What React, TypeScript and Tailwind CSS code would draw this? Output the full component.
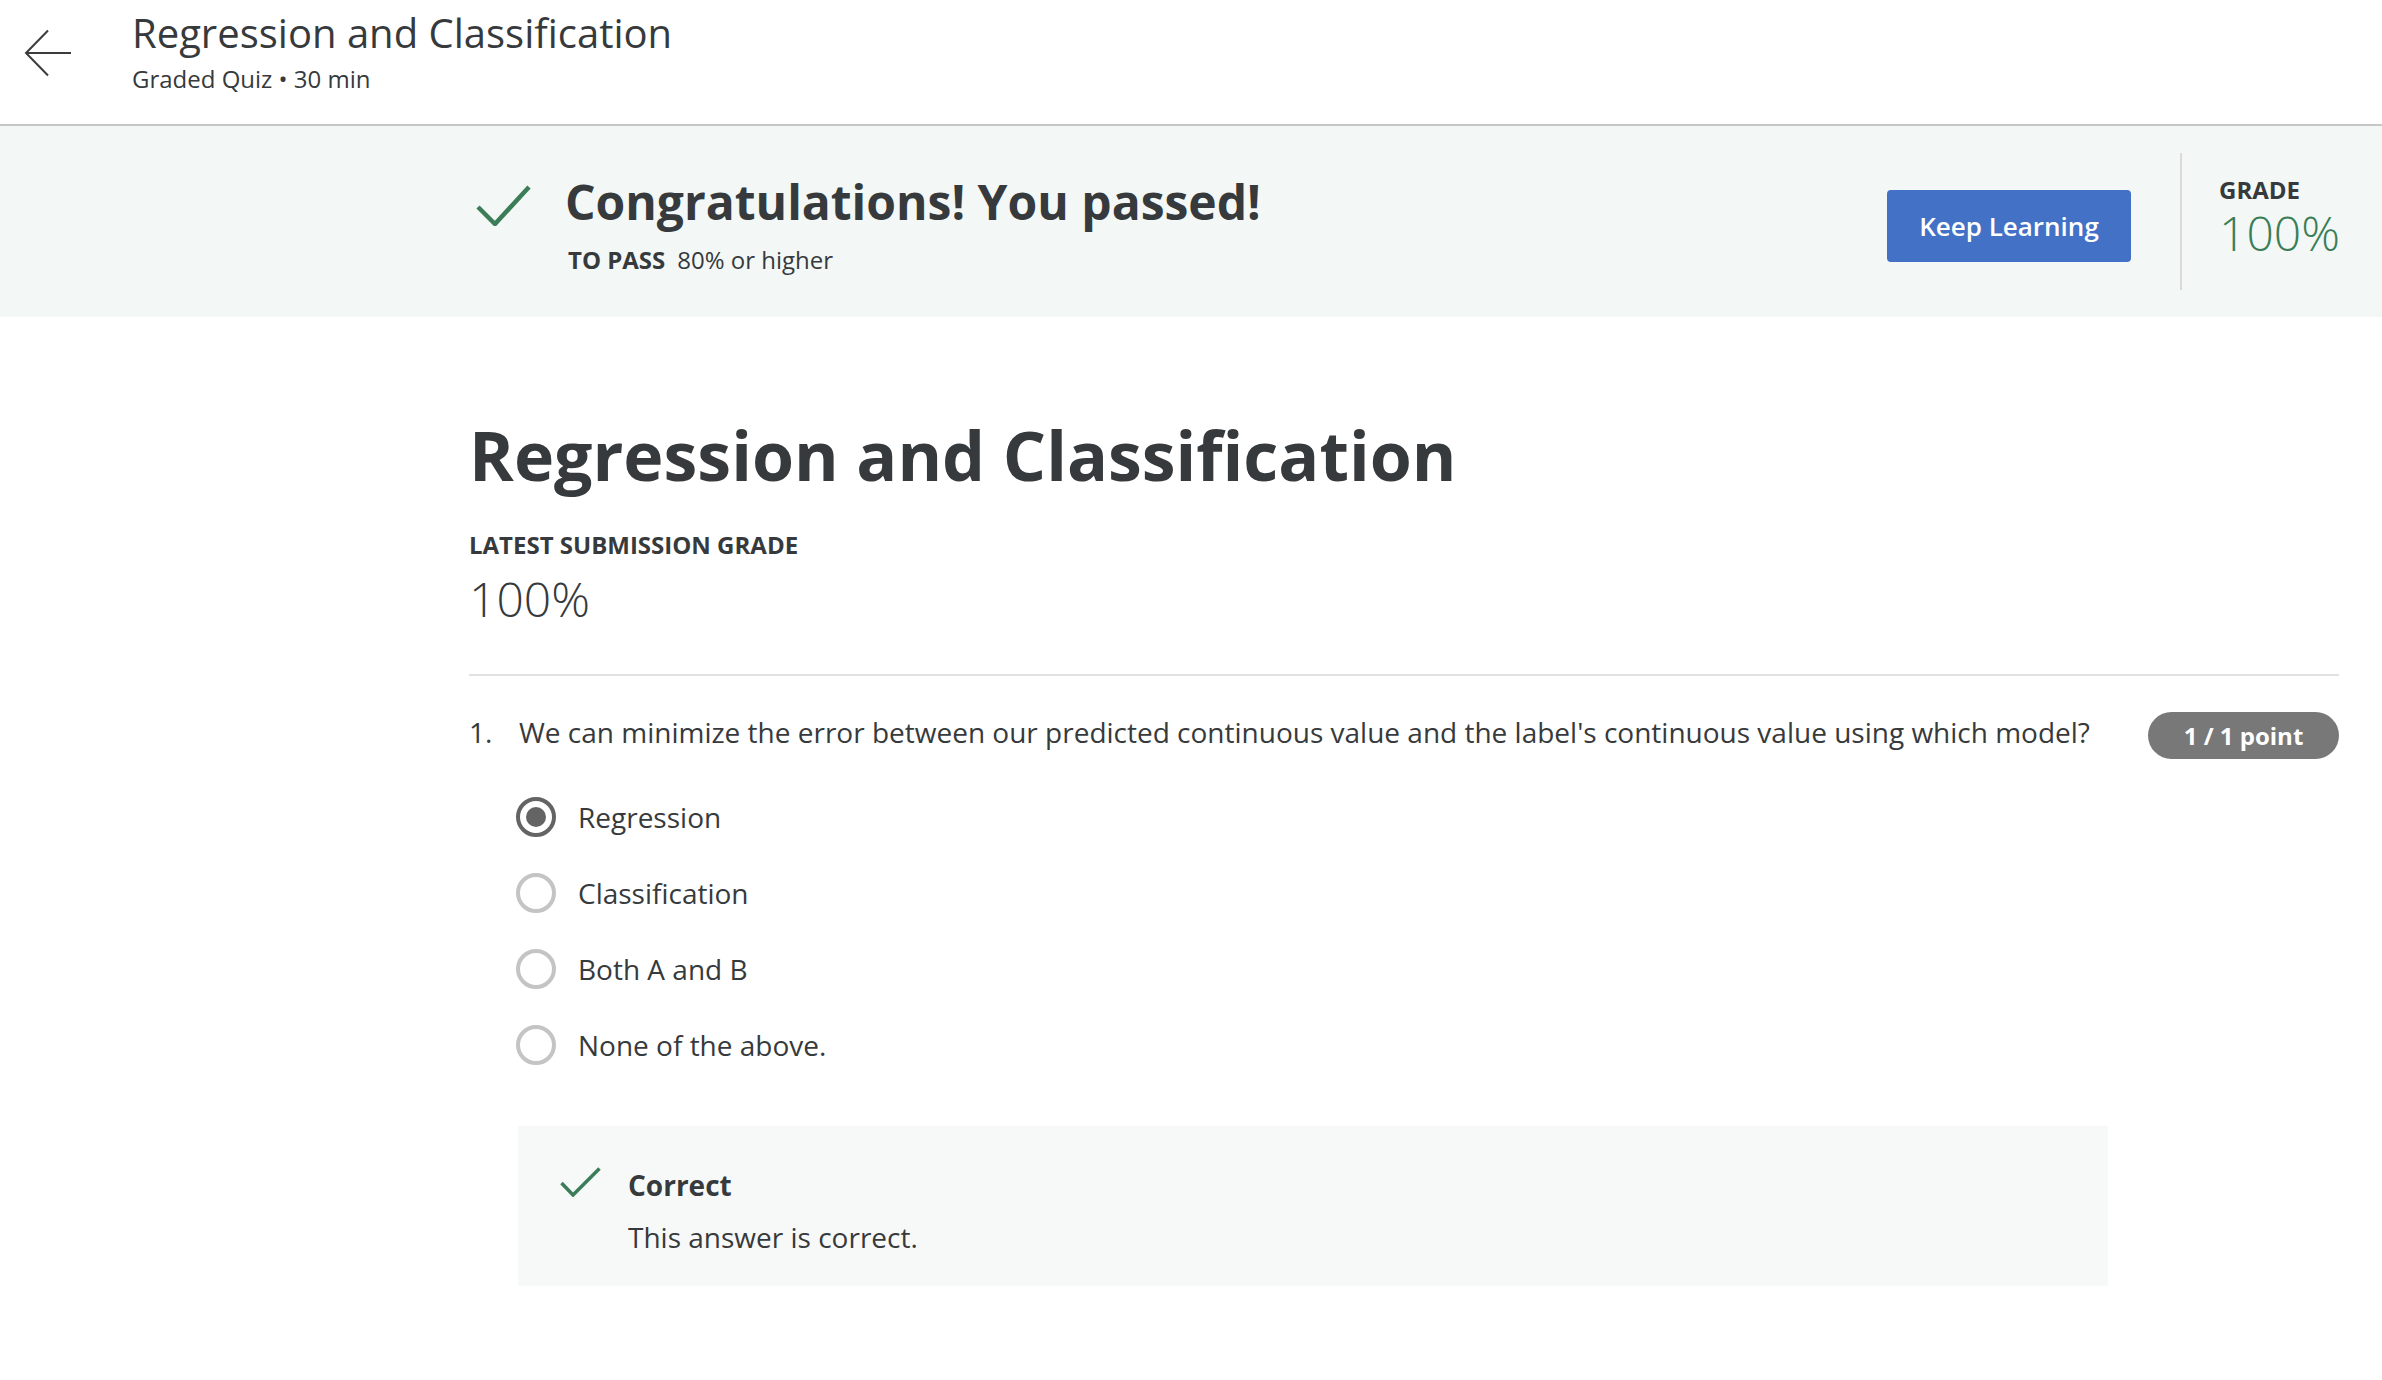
import { FC } from "react";

const font = { fontFamily: '"Open Sans", "Liberation Sans", sans-serif' };

const CheckIcon: FC<{ className?: string }> = ({ className }) => (
  <svg viewBox="0 0 55 41" className={className} fill="none">
    <path d="M2 22 L19 39 L53 2" stroke="#3a7d57" strokeWidth="4.5" />
  </svg>
);

const options = ["Regression", "Classification", "Both A and B", "None of the above."];

const Radio: FC<{ checked?: boolean }> = ({ checked }) =>
  checked ? (
    <div className="w-[40px] h-[40px] rounded-full border-[4px] border-[#646464] flex items-center justify-center">
      <div className="w-[20px] h-[20px] rounded-full bg-[#646464]" />
    </div>
  ) : (
    <div className="w-[40px] h-[40px] rounded-full border-[4px] border-[#c4c4c4]" />
  );

export default function App() {
  return (
    <div className="min-h-screen bg-white text-[#373a3c]" style={font}>
      {/* header */}
      <header className="flex h-[126px] border-b-2 border-[#c6c6c6]">
        <svg viewBox="0 0 48 48" className="ml-[24px] mt-[29px] w-[48px] h-[48px]" fill="none">
          <path d="M47 24 H2 M24 1.5 L2 24 L24 46.5" stroke="#3c3c3c" strokeWidth="2" />
        </svg>
        <div className="ml-[60px] pt-[13px] flex flex-col">
          <h1 className="text-[40px] leading-none font-normal">Regression and Classification</h1>
          <p className="mt-[14px] text-[24px] leading-none">Graded Quiz • 30 min</p>
        </div>
      </header>

      {/* result banner */}
      <section className="h-[191px] bg-[#f3f8f6] flex pl-[469px] pr-[43px]">
        <CheckIcon className="ml-[7px] mt-[59px] w-[55px] h-[41px] shrink-0" />
        <div className="ml-[34px] mt-[52px] flex flex-col">
          <h2 className="text-[48px] leading-none font-bold">Congratulations! You passed!</h2>
          <p className="mt-[22px] ml-[3px] text-[24px] leading-none">
            <span className="font-bold">TO PASS</span>
            <span className="ml-[12px]">80% or higher</span>
          </p>
        </div>
        <div className="flex-1" />
        <button className="mt-[64px] w-[244px] h-[72px] rounded-[4px] bg-[#4271c6] text-white text-[26px] font-semibold">
          Keep Learning
        </button>
        <div className="ml-[49px] mt-[27px] w-[2px] h-[137px] bg-[#dadada]" />
        <div className="ml-[37px] mt-[52px] w-[120px] flex flex-col">
          <span className="text-[24px] leading-none font-bold">GRADE</span>
          <span className="mt-[7px] text-[48px] leading-none font-light text-[#3a7d57]">100%</span>
        </div>
      </section>

      {/* main */}
      <main className="pl-[469px] pr-[43px] pb-[80px]">
        <h1 className="mt-[104px] text-[68px] leading-none font-bold">Regression and Classification</h1>
        <p className="mt-[44px] text-[24px] leading-none font-bold">LATEST SUBMISSION GRADE</p>
        <p className="mt-[18px] text-[48px] leading-none font-light">100%</p>
        <div className="mt-[51px] h-[2px] bg-[#e1e1e1]" />

        <div className="mt-[36px] flex items-start">
          <span className="pt-[6px] w-[50px] text-[28px] leading-none">1.</span>
          <p className="pt-[6px] text-[28px] leading-none">
            We can minimize the error between our predicted continuous value and the label's continuous value using which model?
          </p>
          <span className="ml-auto shrink-0 w-[191px] h-[47px] rounded-full bg-[#787878] text-white text-[24px] font-bold flex items-center justify-center">
            1 / 1 point
          </span>
        </div>

        <div className="mt-[20px] flex flex-col">
          {options.map((o, i) => (
            <label key={o} className="h-[76px] pl-[47px] flex items-center">
              <Radio checked={i === 0} />
              <span className="ml-[22px] text-[28px] leading-none">{o}</span>
            </label>
          ))}
        </div>

        <div className="mt-[43px] ml-[49px] w-[1590px] h-[160px] bg-[#f7f9f9] flex pl-[42px] pt-[41px]">
          <svg viewBox="0 0 41 30" className="w-[41px] h-[30px] shrink-0" fill="none">
            <path d="M1.5 16 L13 28 L39.5 1.5" stroke="#3a7d57" strokeWidth="3.5" />
          </svg>
          <div className="ml-[27px] mt-[4px] flex flex-col">
            <span className="text-[28px] leading-none font-bold">Correct</span>
            <span className="mt-[24px] text-[28px] leading-none">This answer is correct.</span>
          </div>
        </div>
      </main>
    </div>
  );
}
